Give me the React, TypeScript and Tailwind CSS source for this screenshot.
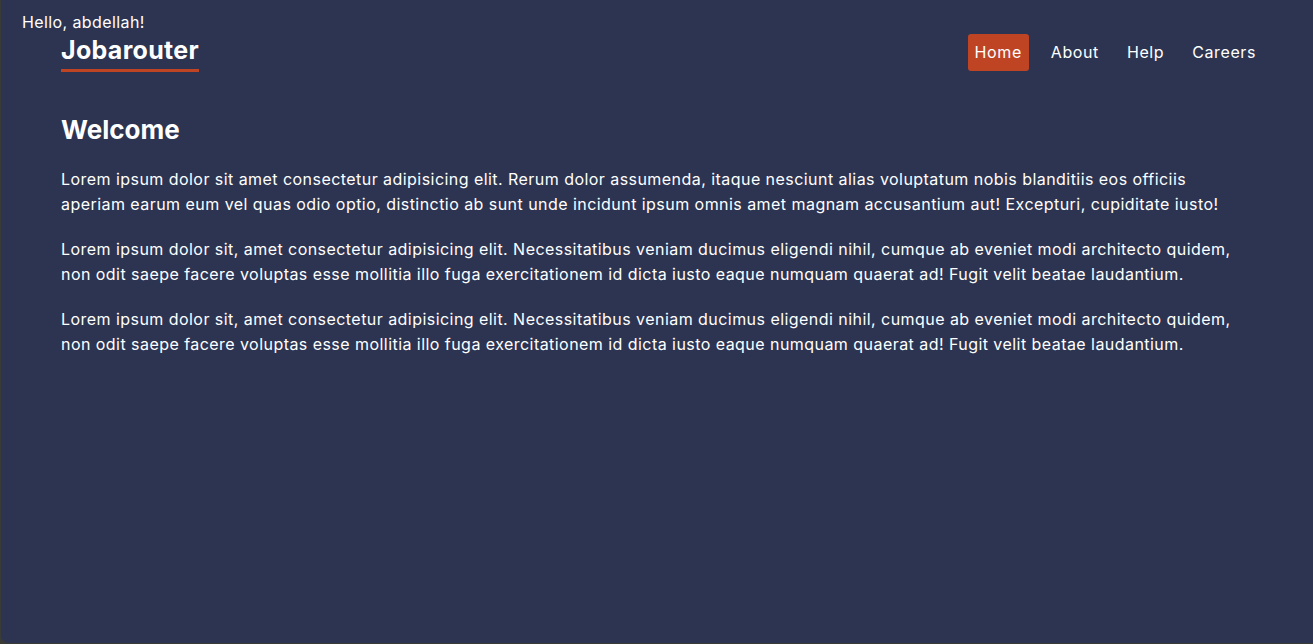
export default function App() {
  const font = { fontFamily: '"Inter", "Noto Sans", sans-serif' };
  return (
    <div className="h-[644px] w-full bg-[#3a3a36] overflow-hidden">
      <div className="h-[643px] ml-px bg-[#2c3452] rounded-bl-[8px] text-white" style={font}>
        <div className="pl-[21px] pt-[12px] text-[16px] leading-[20px] tracking-[0.4px]">Hello, abdellah!</div>
        <header className="flex items-start justify-between pl-[60px] pr-[57px]">
          <div className="mt-[3px] flex flex-col">
            <span className="text-[25px] font-bold leading-[30px] tracking-[0.3px]">Jobarouter</span>
            <span className="mt-[4px] h-[3px] w-full bg-[#bf4424]" />
          </div>
          <nav className="mt-[2px] flex items-center text-[16px] tracking-[0.6px]">
            <a className="rounded-[3px] bg-[#bf4424] px-[7px] py-[8px] leading-[21px]">Home</a>
            <a className="ml-[22px] py-[8px] leading-[21px]">About</a>
            <a className="ml-[28px] py-[8px] leading-[21px]">Help</a>
            <a className="ml-[28px] py-[8px] leading-[21px]">Careers</a>
          </nav>
        </header>
        <main className="px-[60px] pt-[42px]">
          <h1 className="text-[26px] font-bold leading-[32px]">Welcome</h1>
          <div className="mt-[21px] flex flex-col gap-[20px] text-[16px] leading-[25px] tracking-[0.45px]">
            <p>
              Lorem ipsum dolor sit amet consectetur adipisicing elit. Rerum dolor assumenda, itaque nesciunt alias voluptatum nobis blanditiis eos officiis aperiam earum eum vel quas odio optio, distinctio ab sunt unde incidunt ipsum omnis amet magnam accusantium aut! Excepturi, cupiditate iusto!
            </p>
            <p>
              Lorem ipsum dolor sit, amet consectetur adipisicing elit. Necessitatibus veniam ducimus eligendi nihil, cumque ab eveniet modi architecto quidem, non odit saepe facere voluptas esse mollitia illo fuga exercitationem id dicta iusto eaque numquam quaerat ad! Fugit velit beatae laudantium.
            </p>
            <p>
              Lorem ipsum dolor sit, amet consectetur adipisicing elit. Necessitatibus veniam ducimus eligendi nihil, cumque ab eveniet modi architecto quidem, non odit saepe facere voluptas esse mollitia illo fuga exercitationem id dicta iusto eaque numquam quaerat ad! Fugit velit beatae laudantium.
            </p>
          </div>
        </main>
      </div>
    </div>
  );
}
